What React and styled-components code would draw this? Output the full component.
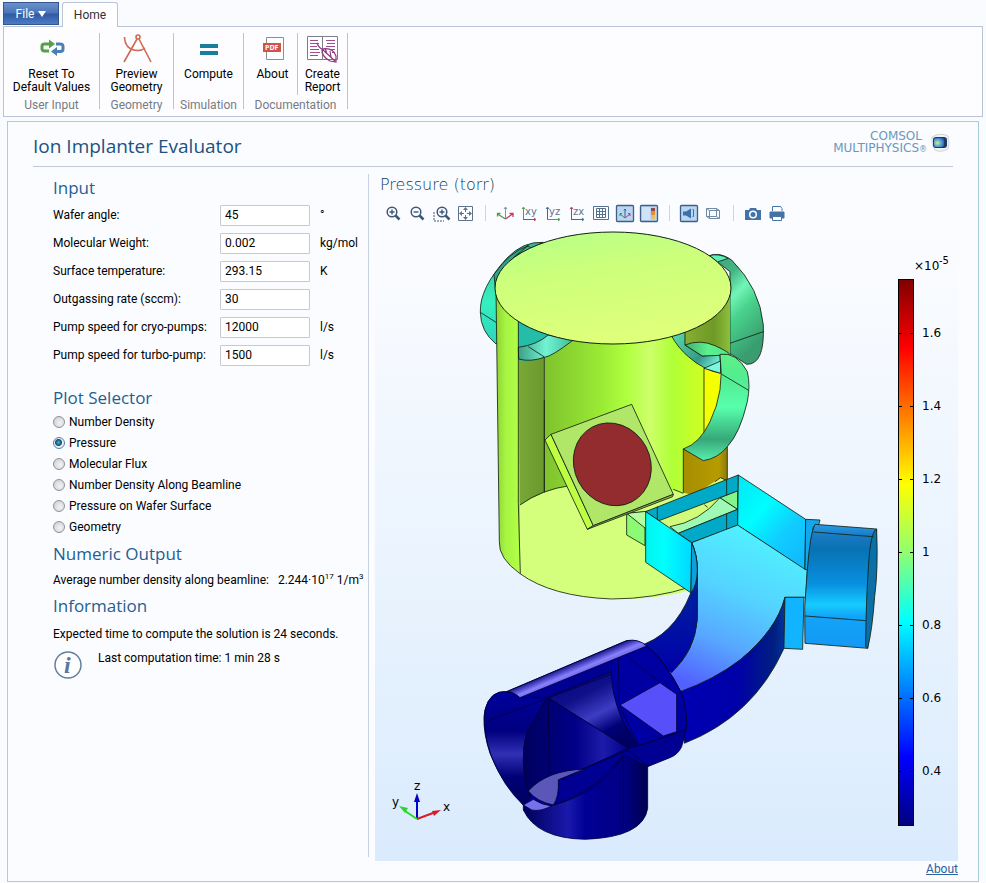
import React, { useState } from 'react';
import styled, { createGlobalStyle } from 'styled-components';

const GlobalStyle = createGlobalStyle`
  * {
    box-sizing: border-box;
  }

  body {
    margin: 0;
    background-color: #fafbff;
    color: #000;
    font-family: Roboto, 'Noto Sans', sans-serif;
    font-size: 12px;
  }

  button,
  input {
    font: inherit;
    color: inherit;
  }
`;

const Page = styled.div`
  padding: 2px 3px;
`;

const Tabs = styled.nav`
  display: flex;
  align-items: flex-end;
  gap: 3px;
  height: 24px;
`;

const FileButton = styled.button`
  align-self: flex-start;
  display: flex;
  align-items: center;
  justify-content: center;
  gap: 4px;
  width: 56px;
  height: 23px;
  padding: 0;
  border: 1px solid #34568f;
  background: linear-gradient(#6b90cb, #4a74b8 48%, #3059a2 52%, #4a7cc4);
  color: #fff;
`;

const HomeTab = styled.button`
  width: 56px;
  height: 25px;
  margin-bottom: -1px;
  padding: 0;
  z-index: 1;
  border: 1px solid #b9c4d6;
  border-bottom: none;
  border-radius: 3px 3px 0 0;
  background-color: #fff;
  color: #333;
`;

const Ribbon = styled.div`
  display: flex;
  height: 91px;
  padding: 6px 0 7px;
  border: 1px solid #b9c4d6;
  background-color: #fdfdff;
`;

const Group = styled.section`
  display: flex;
  flex-direction: column;
  justify-content: space-between;
  width: ${(props) => props.$width}px;
  border-right: 1px solid #b9c4d6;
`;

const GroupButtons = styled.div`
  display: flex;
  justify-content: center;
`;

const GroupLabel = styled.div`
  line-height: 8px;
  text-align: center;
  color: #777b84;
`;

const RibbonButton = styled.button`
  display: flex;
  flex-direction: column;
  align-items: center;
  flex: 1;
  gap: 5px;
  height: 62px;
  padding: 0 0 0 ${(props) => (props.$divided ? 4 : 0)}px;
  border: none;
  border-right: ${(props) => (props.$divided ? '1px solid #b9c4d6' : 'none')};
  background: none;
  line-height: 13px;
  white-space: pre-line;

  svg {
    height: 30px;
  }
`;

const Panel = styled.main`
  margin: 4px 4px 0;
  padding-bottom: 3px;
  border: 1px solid #a8cddb;
  background-color: #fbfcff;
`;

const Header = styled.header`
  display: flex;
  justify-content: space-between;
  height: 45px;
  margin: 0 25px 7px;
  border-bottom: 1px solid #c3c9d8;
`;

const Title = styled.h1`
  margin: 0;
  font-family: 'Open Sans', sans-serif;
  font-size: 19px;
  font-weight: 400;
  line-height: 48px;
  color: #1c5180;
`;

const Brand = styled.div`
  display: flex;
  align-items: center;
  gap: 3px;
  height: 42px;
`;

const BrandName = styled.div`
  font-family: 'DejaVu Sans', sans-serif;
  font-size: 12px;
  line-height: 12px;
  text-align: right;
  color: #6a98bb;

  span {
    display: block;
    padding-right: 5px;
  }

  small {
    font-size: 8px;
  }
`;

const Body = styled.div`
  display: grid;
  grid-template-columns: 316px 1fr;
  gap: 6px;
  padding: 0 20px 0 45px;
`;

const Sidebar = styled.div`
  margin-bottom: 21px;
  border-right: 1px solid #c9d0e0;
`;

const SectionTitle = styled.h2`
  margin: ${(props) => props.$top || 0}px 0 0;
  font-family: 'Open Sans', sans-serif;
  font-size: 17px;
  font-weight: 400;
  line-height: 27px;
  color: #1f5f92;
`;

const Field = styled.div`
  display: grid;
  grid-template-columns: 157px 90px 1fr;
  column-gap: 10px;
  align-items: center;
  height: 28px;
  white-space: nowrap;
`;

const TextBox = styled.input`
  width: 90px;
  height: 21px;
  padding: 0 4px;
  border: 1px solid #c6c9d2;
  border-radius: 1px;
  background-color: #fff;
`;

const Option = styled.label`
  display: flex;
  align-items: center;
  gap: 4px;
  height: 21px;
`;

const Radio = styled.input`
  appearance: none;
  width: 12px;
  height: 12px;
  margin: 0;
  border: 1px solid #8e9298;
  border-radius: 50%;
  background: radial-gradient(circle at 60% 60%, #f2f2f2, #c9cbce);

  &:checked {
    border-color: #5a7fa0;
    background: radial-gradient(circle at 45% 45%, #49b4d8 0, #12506f 3px, #e8f0f6 4px);
  }
`;

const Line = styled.div`
  display: flex;
  align-items: center;
  gap: 9px;
  height: ${(props) => props.$height}px;
  white-space: nowrap;

  sup {
    font-size: 8px;
    line-height: 1px;
  }
`;

const InfoRow = styled.div`
  display: flex;
  gap: 16px;
  padding: 2px 1px;
  line-height: 14px;
`;

const Graphics = styled.section`
  display: flex;
  flex-direction: column;
  min-width: 0;
`;

const PlotTitle = styled.h3`
  margin: 0;
  padding-left: 5px;
  font-family: 'DejaVu Sans', sans-serif;
  font-size: 16px;
  font-weight: 200;
  line-height: 22px;
  color: #0a3c5c;
`;

const Toolbar = styled.div`
  display: flex;
  align-items: center;
  height: 33px;
  padding-left: 6px;
`;

const ToolButton = styled.button`
  display: block;
  width: 24px;
  height: 24px;
  padding: 0;
  border: none;
  background: none;

  svg {
    display: block;
  }
`;

const ToolSeparator = styled.span`
  width: 1px;
  height: 16px;
  margin: 0 7px 0 8px;
  background-color: #cdd5e3;
`;

const Plot = styled.svg`
  display: block;
  width: 100%;
  height: auto;
  background: linear-gradient(#fbfcff, #ebf4fe 50%, #daebfd);
  font-family: 'DejaVu Sans', sans-serif;
  font-size: 12px;
`;

const AboutLink = styled.a`
  align-self: flex-end;
  line-height: 17px;
  color: #2a62a0;
`;

const fields = [
  { id: 'angle', label: 'Wafer angle:', value: '45', unit: '°' },
  { id: 'weight', label: 'Molecular Weight:', value: '0.002', unit: 'kg/mol' },
  { id: 'temperature', label: 'Surface temperature:', value: '293.15', unit: 'K' },
  { id: 'outgassing', label: 'Outgassing rate (sccm):', value: '30', unit: '' },
  { id: 'cryo', label: 'Pump speed for cryo-pumps:', value: '12000', unit: 'l/s' },
  { id: 'turbo', label: 'Pump speed for turbo-pump:', value: '1500', unit: 'l/s' },
];

const plots = [
  'Number Density',
  'Pressure',
  'Molecular Flux',
  'Number Density Along Beamline',
  'Pressure on Wafer Surface',
  'Geometry',
];

const ResetIcon = () => (
  <svg width="26" height="30" fill="none" strokeWidth="3">
    <path d="M10 18H5.5Q3 18 3 15.500V13Q3 11 5.500 11H11" stroke="#55a045" />
    <path d="M10 6.500l6 4.500-6 4.500z" fill="#55a045" />
    <path d="M17 11h4Q24 11 24 13.500V16Q24 18.500 21.500 18.500H17" stroke="#4a7fb5" />
    <path d="M18 14l-6 4.500 6 4.500z" fill="#4a7fb5" />
  </svg>
);

const CompassIcon = () => (
  <svg width="30" height="30" fill="none" stroke="#cf6a50" strokeWidth="1.600">
    <circle cx="16" cy="4" r="2" />
    <path d="M15 6L2 29M17 6l12 23" />
    <path d="M2.500 4Q3 17 16 17.500 20 17.500 23 15" />
  </svg>
);

const EqualsIcon = () => (
  <svg width="20" height="30" fill="#197f9c">
    <path d="M1 11h18v4H1zM1 18h18v4H1z" />
  </svg>
);

const PdfIcon = () => (
  <svg width="24" height="30">
    <path d="M5.500 4.500h17v22h-17z" fill="#fff" stroke="#8a8d94" />
    <path d="M2 10h18v9H2z" fill="#d0524c" />
    <text x="4" y="17" fontFamily="Open Sans, sans-serif" fontSize="7" fontWeight="700" fill="#fff">PDF</text>
  </svg>
);

const ReportIcon = () => (
  <svg width="32" height="30" fill="none">
    <path d="M.500 3.500h15v23H.500zM15.500 3.500h15v23h-15z" stroke="#7c7f88" fill="#fff" />
    <path d="M3 7.500h8M3 10.500h9M3 13.500h7M3 16.500h9M3 19.500h10M3 22.500h8M19 7.500h9M20 10.500h8M19 13.500h9M23 16.500h5M25 19.500h3" stroke="#a04c90" />
    <path d="M10 10q2 5 5 6-1 7 8 12l6 1 0-6q-3-9-14-7M15 16l13 12M18 15l2 6M23 18l1 6" stroke="#8f3880" strokeWidth="1.200" />
  </svg>
);

const BrandMark = () => (
  <svg width="23" height="20" viewBox="0 0 23 20">
    <defs>
      <radialGradient id="mark" cx=".35" cy=".55" r=".7">
        <stop offset="0" stopColor="#f2e85a" />
        <stop offset=".45" stopColor="#63b3d5" />
        <stop offset="1" stopColor="#2a5cb7" />
      </radialGradient>
    </defs>
    <path d="M2 4Q10-1 18 3q2 7 0 13-8 4-13 1Q1 11 2 4z" fill="#f1f2f6" stroke="#d3d5dc" />
    <rect x="3" y="4" width="14" height="11" rx="3" fill="#20376e" />
    <rect x="4" y="5" width="10" height="9" rx="2" fill="url(#mark)" />
  </svg>
);

const InfoIcon = () => (
  <svg width="28" height="28">
    <circle cx="14" cy="14" r="13" fill="#fff" stroke="#64809f" strokeWidth="1.500" />
    <text x="10" y="22" fontFamily="Liberation Serif, serif" fontSize="24" fontStyle="italic" fontWeight="700" fill="#5878a0">i</text>
  </svg>
);

const Lens = ({ plus }) => (
  <>
    <circle cx="11" cy="11" r="4.800" strokeWidth="1.500" />
    <path d="M14.500 14.500l4 4" strokeWidth="2.500" />
    <path d={plus ? 'M8.500 11h5M11 8.500v5' : 'M8.500 11h5'} strokeWidth="1.400" />
  </>
);

const PlaneAxes = ({ name, up, across }) => (
  <>
    <path d="M6.500 18V7M5 8l1.500-2 1.500 2" stroke={up} />
    <path d="M6 18.500h12M17 17l2 1.500-2 1.500" stroke={across} />
    <text x="8" y="14" fontFamily="DejaVu Sans, sans-serif" fontSize="10" fill="#61758c" stroke="none">{name}</text>
  </>
);

const Pressed = () => (
  <rect x="3.500" y="4.500" width="17" height="16" rx="1" fill="#b9d6f3" stroke="#3f5f85" strokeWidth="1.300" />
);

const tools = [
  { name: 'Zoom in', icon: <Lens plus /> },
  { name: 'Zoom out', icon: <Lens /> },
  {
    name: 'Zoom box',
    icon: (
      <g>
        <path d="M5 11v9h10" strokeDasharray="2 1" />
        <g transform="translate(2)"><Lens plus /></g>
      </g>
    ),
  },
  {
    name: 'Zoom extents',
    icon: (
      <g stroke="#60718a">
        <path d="M5.500 5.500h14v14h-14z" />
        <path d="M12.500 7v4M12.500 14v4M7 12.500h4M14 12.500h4" />
        <path d="M12.500 6l2.500 3h-5zM12.500 19l2.500-3h-5zM6 12.500l3-2.500v5zM19 12.500l-3-2.500v5z" fill="#60718a" stroke="none" />
      </g>
    ),
  },
  null,
  {
    name: 'Default view',
    icon: (
      <g>
        <path d="M12.500 18V6M11 8l1.500-2 1.500 2" stroke="#7d9a9b" />
        <path d="M12.500 18l-8-5M7.500 12.500H4.500V15.500" stroke="#4e9e4a" strokeWidth="1.300" />
        <path d="M12.500 18l7-5M16.500 12.500h3.500V16" stroke="#c43b5b" strokeWidth="1.300" />
      </g>
    ),
  },
  { name: 'View xy', icon: <PlaneAxes name="xy" up="#4e9e4a" across="#b04060" /> },
  { name: 'View yz', icon: <PlaneAxes name="yz" up="#4a6a8c" across="#4e9e4a" /> },
  { name: 'View zx', icon: <PlaneAxes name="zx" up="#b04060" across="#4a6a8c" /> },
  {
    name: 'Show grid',
    icon: (
      <g stroke="#56718f">
        <path d="M4.500 5.500h15v13h-15z" />
        <path d="M7.500 7.500h9v9h-9zM10.500 7.500v9M13.500 7.500v9M7.500 10.500h9M7.500 13.500h9" />
      </g>
    ),
  },
  {
    name: 'Show axes',
    icon: (
      <g>
        <Pressed />
        <path d="M12 17V8M11 9.500L12 8l1 1.500" stroke="#33649b" />
        <path d="M12 17l-5-4M7 15v-2.500h2" stroke="#3d8f55" />
        <path d="M12 17l5-4M15 12.500h2V15" stroke="#c43b5b" />
      </g>
    ),
  },
  {
    name: 'Show legends',
    icon: (
      <g>
        <Pressed />
        <path d="M5 6h8v13H5z" fill="#cfe2f6" stroke="none" />
        <path d="M14 7h4v4h-4z" fill="#8b4a48" stroke="none" />
        <path d="M14 10h4v4h-4z" fill="#ea8b2e" stroke="none" />
        <path d="M14 14h4v4h-4z" fill="#e0c070" stroke="none" />
      </g>
    ),
  },
  null,
  {
    name: 'Scene light',
    icon: (
      <g>
        <Pressed />
        <path d="M6 10.500h3l5-3v10l-5-3H6z" fill="#3c70ab" stroke="none" />
        <path d="M15.500 8.500h1v7h-1" stroke="#3c70ab" />
      </g>
    ),
  },
  {
    name: 'Transparency',
    icon: (
      <g stroke="#718aa6">
        <path d="M5.500 7.500h10v8h-10zM8.500 9.500h10v8h-10zM5.500 7.500l3 2M15.500 7.500l3 2M5.500 15.500l3 2M15.500 15.500l3 2" />
      </g>
    ),
  },
  null,
  {
    name: 'Snapshot',
    icon: (
      <g stroke="none" fill="#4472a5">
        <path d="M4 9h4l1-2h6l1 2h4v10H4z" />
        <circle cx="12" cy="13.500" r="4" fill="#fff" />
        <circle cx="12" cy="13.500" r="2.500" />
      </g>
    ),
  },
  {
    name: 'Print',
    icon: (
      <g stroke="#4472a5">
        <path d="M7.500 10V5.500h8l1.500 2V10" fill="#fff" />
        <path d="M5 11h14v6H5z" fill="#4472a5" />
        <path d="M7.500 15.500h9v4h-9z" fill="#fff" />
      </g>
    ),
  },
];

const ticks = ['1.6', '1.4', '1.2', '1', '0.8', '0.6', '0.4'];

const Shade = ({ stops, vertical, x2, y2, ...rest }) => (
  <linearGradient {...rest} x2={x2 ?? (vertical ? 0 : 1)} y2={y2 ?? (vertical ? 1 : 0)}>
    {stops.map(([offset, color]) => (
      <stop key={offset} offset={offset} stopColor={color} />
    ))}
  </linearGradient>
);

const Shades = () => (
  <defs>
    <Shade id="jet" vertical stops={[[0, '#800000'], [0.125, '#ff0000'], [0.375, '#ffff00'], [0.5, '#90ff70'], [0.625, '#00ffff'], [0.875, '#0000ff'], [1, '#000080']]} />
    <Shade id="lid" x2={0.3} y2={1} stops={[[0, '#b4ff88'], [0.4, '#ccff7c'], [1, '#deff7a']]} />
    <Shade id="strip" stops={[[0, '#8ed234'], [0.4, '#a6f542'], [1, '#b4ff48']]} />
    <Shade id="alcove" stops={[[0, '#79a936'], [1, '#6b982c']]} />
    <Shade id="wall" stops={[[0, '#7fc22d'], [0.35, '#99ea34'], [0.52, '#b0ff40'], [0.66, '#ceff6c'], [0.8, '#b0ff38'], [1, '#d0ff22']]} />
    <Shade id="olive" stops={[[0, '#88b034'], [0.65, '#6f9826'], [1, '#8bc03c']]} />
    <Shade id="gold" stops={[[0, '#a58d00'], [0.8, '#b99b00'], [1, '#8b7a10']]} />
    <Shade id="portLeft" vertical stops={[[0, '#39b58e'], [0.35, '#38dcb0'], [0.6, '#36f0c0'], [1, '#2ed3be']]} />
    <Shade id="portRight" x2={0.5} y2={1} stops={[[0, '#3e9f77'], [0.3, '#44b684'], [0.48, '#72f5b7'], [0.65, '#49d38c'], [1, '#399d70']]} />
    <Shade id="portTop" stops={[[0, '#3fae72'], [0.5, '#5cf08e'], [1, '#4de58a']]} />
    <Shade id="portFront" vertical stops={[[0, '#5df086'], [0.25, '#52ed93'], [0.5, '#57ffac'], [0.8, '#36a878'], [1, '#58eeaf']]} />
    <Shade id="tealLip" stops={[[0, '#3c9f85'], [0.5, '#72f3d4'], [1, '#3bbd97']]} />
    <Shade id="wedge" x2={1} y2={0.6} stops={[[0, '#5fe0b0'], [0.5, '#3fae90'], [0.7, '#35978a'], [1, '#6fe8cc']]} />
    <Shade id="cyan" stops={[[0, '#00f4ee'], [0.4, '#00ffff'], [1, '#00d8ff']]} />
    <Shade id="cyanRight" x2={0.8} y2={1} stops={[[0, '#00e8f4'], [0.4, '#00fdff'], [0.7, '#10ceff'], [1, '#12baff']]} />
    <Shade id="ductFloor" x1={0.65} x2={0.3} y2={1} stops={[[0, '#50f4ff'], [0.4, '#54d4ff'], [0.7, '#58a8ff'], [1, '#5260ff']]} />
    <Shade id="ductInner" vertical stops={[[0, '#0870d0'], [0.35, '#0020a0'], [1, '#0000a8']]} />
    <Shade id="ductOuter" stops={[[0, '#0000b4'], [0.55, '#0000a8'], [0.9, '#002080'], [1, '#0036a0']]} />
    <Shade id="turboBody" vertical stops={[[0, '#289ce8'], [0.1, '#1878c0'], [0.2, '#0872b4'], [0.48, '#0890e0'], [0.65, '#16ccff'], [0.74, '#12a4f8'], [1, '#1398f4']]} />
    <Shade id="lavender" gradientUnits="userSpaceOnUse" x1="312" y1="186" x2="328" y2="224" stops={[[0, '#0c0c7c'], [0.3, '#4440bc'], [0.65, '#8880ff'], [1, '#6c66e4']]} />
    <Shade id="navy" stops={[[0, '#00005c'], [0.36, '#1919ac'], [0.5, '#000095'], [0.8, '#000086'], [1, '#000050']]} />
    <Shade id="cone" stops={[[0, '#00005c'], [0.25, '#000074'], [0.5, '#000088'], [0.76, '#1c1caa'], [1, '#00008c']]} />
    <Shade id="bore" vertical stops={[[0, '#00009c'], [0.35, '#000080'], [0.55, '#3030b4'], [0.75, '#000077'], [1, '#000060']]} />
    <Shade id="sheen" x2={0.6} y2={1} stops={[[0, '#000084'], [0.4, '#10108a'], [0.65, '#3d3dc4'], [0.85, '#000078'], [1, '#000063']]} />
  </defs>
);

const Chamber = () => (
  <g transform="translate(95 -4) scale(.3333)">
    <path d="M220 52Q160 48 110 100Q28 190 31 262Q32 320 78 357L120 340V100z" fill="url(#portLeft)" />
    <path d="M175 62Q90 120 76 190L72 148Q120 80 175 62z" fill="#34a58d" />
    <path d="M31 262L78 292M172 61l10 8" />
    <path d="M718 92Q750 80 785 105Q870 190 880 300Q885 420 830 418L780 385V140z" fill="url(#portRight)" />
    <path d="M718 92Q745 84 775 100L742 111z" fill="#5cf0bb" />
    <path d="M780 355L880 320" />
    {/* shell of the vacuum chamber */}
    <path d="M78 190L88 950Q85 1000 151 1046V190z" fill="url(#strip)" stroke="none" />
    <path d="M145 280H223V905L150 1000z" fill="url(#alcove)" stroke="none" />
    <path d="M223 280H702V1000H223z" fill="url(#wall)" stroke="none" />
    <path d="M640 190H780V385L645 360z" fill="url(#olive)" stroke="none" />
    <path d="M223 390V800" />
    <path d="M144 285H300V350Q200 420 145 405z" fill="#24bea8" stroke="none" />
    <path d="M145 367Q200 360 235 330L310 345Q245 395 223 397Q180 412 146 402z" fill="url(#tealLip)" />
    <path d="M175 365L223 396" />
    {/* front port */}
    <path d="M640 672L700 700L772 640V820H640z" fill="url(#gold)" />
    <path d="M702 420L752 440V570L702 650z" fill="#f4ff00" stroke="none" />
    <path d="M702 430V640" />
    <path d="M603 330L645 320V360L697 393L750 388L752 445Q700 435 655 395Q625 370 603 330z" fill="url(#wedge)" />
    <path d="M645 360Q690 342 735 362Q775 380 782 390L697 393z" fill="url(#portTop)" />
    <path d="M702 430L752 408L752 445z" fill="#7cf8e2" />
    <path d="M750 388Q800 380 832 440Q842 480 832 530Q810 625 772 665Q745 700 700 707L640 672Q690 655 720 590Q765 500 750 388z" fill="url(#portFront)" />
    <path d="M754 447L836 496" />
  </g>
);

const Stage = () => (
  <g transform="translate(95 171) scale(.3333)">
    <path d="M150 315Q220 268 300 257H540L640 278L740 300L665 570Q560 600 425 597Q245 590 150 521z" fill="#d4ff7c" stroke="none" />
    <path d="M150 315Q215 268 300 257M610 268L640 280" />
    <path d="M145 -240V310L151 521M223 0V278" />
    <path d="M78 -335L88 425Q85 475 150 521Q245 590 425 597Q550 597 665 560" fill="none" />
    <path d="M470 340L525 336L527 366M470 340V405L525 437V376z" fill="#8cfa72" />
    <path d="M470 340L550 332L570 420z" fill="#b5ffa0" />
    <path d="M225 120L243 103L370 377L352 388z" fill="#bfff43" />
    <path d="M243 103L485 13L610 283L370 377z" fill="#b1e769" />
    <path d="M352 388L608 290L610 283L370 377z" fill="#91b94c" />
    <ellipse cx="427" cy="193" rx="114" ry="127" transform="rotate(-28 427 193)" fill="#922c2e" />
    {/* beam slot */}
    <path d="M560 355L750 235L803 270V330L625 402z" fill="#d1fb79" stroke="none" />
    <path d="M735 245L752 233L775 244" fill="#d6ff7c" />
    <path d="M600 380Q690 365 750 293L803 328L625 400z" fill="#9ff8b3" />
    <path d="M750 293L803 272V328z" fill="#83f58b" />
    <path d="M527 335L805 225V272L567 362z" fill="#00a9c8" />
    <path d="M562 320V360M770 240V285M703 314l10 8" />
    <path d="M625 400L803 328V377L665 428z" fill="#00a9c8" />
    <path d="M770 342V390" />
  </g>
);

const Duct = () => (
  <g transform="translate(245 231) scale(.3333)">
    <path d="M215 248L353 195L562 330L558 412L495 412Q470 510 360 600Q280 665 180 698L140 640Q230 590 232 450V330Q232 285 215 248z" fill="url(#ductFloor)" />
    <path d="M215 248Q232 285 232 330V480Q225 570 155 638L50 560Q160 530 212 400z" fill="url(#ductInner)" />
    <path d="M215 248Q232 285 232 330Q232 375 212 400z" fill="#0aa0dc" />
    <path d="M495 412L492 565Q400 770 193 850L180 695Q280 660 360 600Q470 510 495 412z" fill="url(#ductOuter)" />
    <path d="M77 155L215 248L212 398L77 307z" fill="url(#cyan)" />
    <path d="M355 45L557 178L555 328L353 195z" fill="url(#cyanRight)" />
    <path d="M557 178L600 180L596 195L580 200L562 330L555 328z" fill="#12a8ee" />
    <path d="M495 412H552L548 568L492 565z" fill="#12b4ff" />
    <path d="M585 193L770 207L743 565L555 550Q550 440 562 330Q570 220 585 193z" fill="url(#turboBody)" />
    <path d="M770 207Q775 330 764 410Q757 510 743 565L737 558Q738 420 746 310Q752 215 770 207z" fill="#0b6fa8" />
    <path d="M580 216L760 230M555 468L738 482" />
  </g>
);

const PumpHousing = () => (
  <g transform="translate(95 371) scale(.3333)">
    <path d="M160 580V630Q200 715 345 718Q520 712 533 625V490L460 455z" fill="url(#navy)" />
    <path d="M110 275L470 122Q510 118 540 145Q590 190 635 280Q655 350 650 385L635 440Q625 463 600 473L533 500L460 465Q400 540 340 575Q230 640 160 615Q90 540 60 460Q40 400 42 350Q50 275 110 275z" fill="#000092" />
    <path d="M110 275Q60 270 45 330Q38 400 65 470Q100 560 160 615L180 590Q145 480 170 410Q200 340 232 292L150 293Q130 275 110 275z" fill="url(#bore)" />
    <path d="M232 292L425 215Q430 340 505 437L475 445z" fill="url(#sheen)" />
    <path d="M232 292L475 445L265 540L180 590Q145 480 170 400z" fill="url(#cone)" />
    <path d="M425 180L530 138Q590 190 635 280Q655 340 645 390L505 437Q415 320 425 180z" fill="#0000a2" />
    <path d="M450 315L570 248L620 283V395L580 408z" fill="#574ffa" />
    <path d="M175 573Q230 510 350 507L265 540Q268 590 250 615Q200 605 175 573z" fill="#5a57b8" />
    <path d="M160 615L190 598Q215 615 245 618Q210 636 185 630z" fill="#7770ed" />
    <path d="M110 275L470 122Q505 115 530 138L150 293Q130 274 110 275z" fill="url(#lavender)" />
    <path d="M55 362L425 222M235 295L237 520M445 175L448 312M470 168L570 248M448 315L505 437M505 437L640 392M475 450L535 498M460 465V680M265 540L475 450M250 615Q390 580 460 465" />
  </g>
);

const PressurePlot = () => (
  <Plot viewBox="0 0 583 632" role="img" aria-label="Pressure (torr)">
    <Shades />
    <g fill="none" stroke="#142012" strokeWidth="2.500">
      <Chamber />
      <Stage />
      <ellipse cx="238" cy="59" rx="118" ry="56" fill="url(#lid)" strokeWidth="1" />
      <Duct />
    </g>
    <g fill="none" stroke="#00003c" strokeWidth="2.500">
      <PumpHousing />
    </g>
    {/* axis triad */}
    <path d="M42 590V570" stroke="#0000d0" strokeWidth="2" />
    <path d="M42 564l3 9h-6z" fill="#0000d0" />
    <path d="M42 590l16-6" stroke="#d81c24" strokeWidth="2" />
    <path d="M66 581l-7 6-2-5z" fill="#d81c24" />
    <path d="M42 590l-12-8" stroke="#28d828" strokeWidth="2" />
    <path d="M24 577l9 2-3 5z" fill="#28d828" />
    <text x="39" y="561">z</text>
    <text x="17" y="577">y</text>
    <text x="68" y="582">x</text>
    {/* colour legend */}
    <rect x="523.500" y="50.500" width="15" height="546" fill="url(#jet)" stroke="#000" />
    <text x="539" y="41">×10</text>
    <text x="564" y="35" fontSize="10">-5</text>
    {ticks.map((tick, i) => (
      <g key={tick}>
        <path d={`M524 ${104.5 + i * 73}h3M535 ${104.5 + i * 73}h3`} stroke="#000" />
        <text x="547" y={108 + i * 73}>{tick}</text>
      </g>
    ))}
  </Plot>
);

const App = () => {
  const [values, setValues] = useState(
    Object.fromEntries(fields.map((field) => [field.id, field.value]))
  );
  const [plot, setPlot] = useState('Pressure');

  const handleChange = (e) => {
    setValues({ ...values, [e.target.name]: e.target.value });
  };

  return (
    <Page>
      <GlobalStyle />
      <Tabs>
        <FileButton>
          File
          <svg width="8" height="6"><path d="M0 0h8L4 6z" fill="#fff" /></svg>
        </FileButton>
        <HomeTab>Home</HomeTab>
      </Tabs>
      <Ribbon>
        <Group $width={96}>
          <GroupButtons>
            <RibbonButton><ResetIcon />{'Reset To\nDefault Values'}</RibbonButton>
          </GroupButtons>
          <GroupLabel>User Input</GroupLabel>
        </Group>
        <Group $width={74}>
          <GroupButtons>
            <RibbonButton><CompassIcon />{'Preview\nGeometry'}</RibbonButton>
          </GroupButtons>
          <GroupLabel>Geometry</GroupLabel>
        </Group>
        <Group $width={70}>
          <GroupButtons>
            <RibbonButton><EqualsIcon />Compute</RibbonButton>
          </GroupButtons>
          <GroupLabel>Simulation</GroupLabel>
        </Group>
        <Group $width={104}>
          <GroupButtons>
            <RibbonButton $divided><PdfIcon />About</RibbonButton>
            <RibbonButton><ReportIcon />{'Create\nReport'}</RibbonButton>
          </GroupButtons>
          <GroupLabel>Documentation</GroupLabel>
        </Group>
      </Ribbon>

      <Panel>
        <Header>
          <Title>Ion Implanter Evaluator</Title>
          <Brand>
            <BrandName>
              <span>COMSOL</span>
              MULTIPHYSICS<small>®</small>
            </BrandName>
            <BrandMark />
          </Brand>
        </Header>
        <Body>
          <Sidebar>
            <SectionTitle>Input</SectionTitle>
            {fields.map((field) => (
              <Field key={field.id}>
                <label htmlFor={field.id}>{field.label}</label>
                <TextBox id={field.id} name={field.id} value={values[field.id]} onChange={handleChange} />
                <span>{field.unit}</span>
              </Field>
            ))}
            <SectionTitle $top={15}>Plot Selector</SectionTitle>
            {plots.map((name) => (
              <Option key={name}>
                <Radio type="radio" name="plot" checked={plot === name} onChange={() => setPlot(name)} />
                {name}
              </Option>
            ))}
            <SectionTitle $top={3}>Numeric Output</SectionTitle>
            <Line $height={25}>
              <span>Average number density along beamline:</span>
              <span>2.244·10<sup>17</sup> 1/m<sup>3</sup></span>
            </Line>
            <SectionTitle>Information</SectionTitle>
            <Line $height={30}>Expected time to compute the solution is 24 seconds.</Line>
            <InfoRow>
              <InfoIcon />
              <span>Last computation time: 1 min 28 s</span>
            </InfoRow>
          </Sidebar>
          <Graphics>
            <PlotTitle>Pressure (torr)</PlotTitle>
            <Toolbar>
              {tools.map((tool, i) =>
                tool ? (
                  <ToolButton key={tool.name} aria-label={tool.name}>
                    <svg width="24" height="24" fill="none" stroke="#3f5878">{tool.icon}</svg>
                  </ToolButton>
                ) : (
                  <ToolSeparator key={i} />
                )
              )}
            </Toolbar>
            <PressurePlot />
            <AboutLink href="#about">About</AboutLink>
          </Graphics>
        </Body>
      </Panel>
    </Page>
  );
};

export default App;
